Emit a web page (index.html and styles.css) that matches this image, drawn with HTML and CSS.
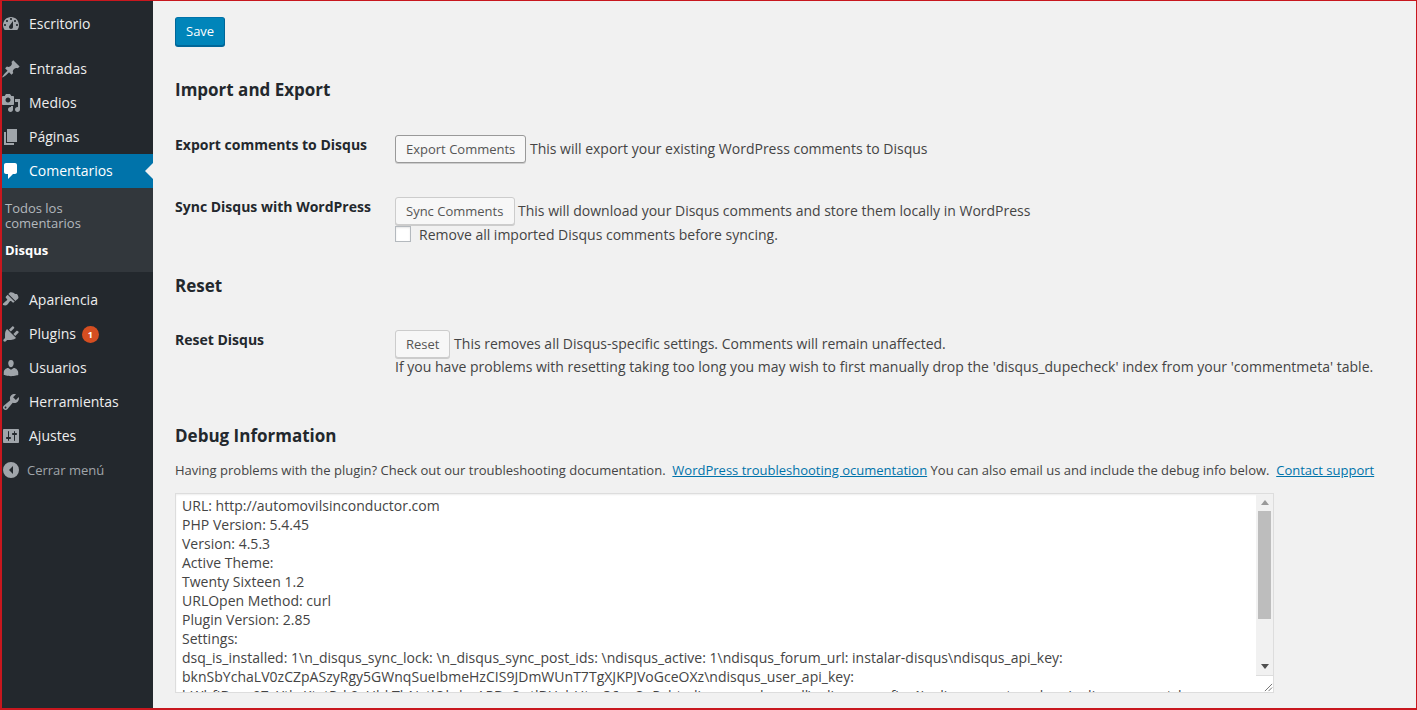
FILE: index.html
```html
<!DOCTYPE html>
<html lang="es">
<head>
<meta charset="utf-8">
<title>Disqus</title>
<link rel="stylesheet" href="styles.css">
</head>
<body>
<div class="frame">
  <nav class="sidebar">
    <a class="item first"><svg class="ico" viewBox="0 0 20 20"><path fill-rule="evenodd" d="M3.760 16h12.480c1.100-1.370 1.760-3.110 1.760-5 0-4.420-3.580-8-8-8s-8 3.580-8 8c0 1.890.66 3.630 1.760 5zM10 4c.55 0 1 .45 1 1s-.45 1-1 1-1-.45-1-1 .45-1 1-1zM6 6c.55 0 1 .45 1 1s-.45 1-1 1-1-.45-1-1 .45-1 1-1zm8 0c.55 0 1 .45 1 1s-.45 1-1 1-1-.45-1-1 .45-1 1-1zm-5.370 5.550L12 7v6c0 1.100-.9 2-2 2s-2-.9-2-2c0-.57.24-1.080.63-1.450zM4 10c.55 0 1 .45 1 1s-.45 1-1 1-1-.45-1-1 .45-1 1-1zm12 0c.55 0 1 .45 1 1s-.45 1-1 1-1-.45-1-1 .45-1 1-1z"/></svg><span>Escritorio</span></a>
    <a class="item"><svg class="ico" viewBox="0 0 20 20"><path d="M10.440 3.020l1.820-1.820 6.360 6.350-1.830 1.820c-1.050-.68-2.480-.57-3.410.36l-.75.75c-.92.93-1.040 2.350-.35 3.410l-1.830 1.820-2.410-2.410-2.800 2.790c-.42.42-3.380 2.710-3.800 2.290s1.860-3.390 2.280-3.810l2.790-2.790L4.100 9.360l1.830-1.820c1.050.69 2.480.57 3.400-.36l.75-.75c.93-.92 1.050-2.350.36-3.410z"/></svg><span>Entradas</span></a>
    <a class="item"><svg class="ico" viewBox="0 0 20 20"><path fill-rule="evenodd" d="M13 11V4c0-.55-.45-1-1-1h-1.670L9 1H5L3.670 3H2c-.55 0-1 .45-1 1v7c0 .55.45 1 1 1h10c.55 0 1-.45 1-1zM7 4.500c1.380 0 2.500 1.120 2.500 2.500S8.380 9.500 7 9.500 4.500 8.380 4.500 7 5.620 4.500 7 4.500zM14 6h5v10.500c0 1.380-1.120 2.500-2.500 2.500S14 17.880 14 16.500s1.120-2.500 2.500-2.500c.17 0 .34.020.5.050V9h-3V6zm-4 8.050V13h2v3.500c0 1.380-1.120 2.500-2.500 2.500S7 17.880 7 16.500 8.120 14 9.500 14c.17 0 .34.020.5.050z"/></svg><span>Medios</span></a>
    <a class="item"><svg class="ico" viewBox="0 0 20 20"><path d="M6 15V2h10v13H6zm-1 1h8v2H3V5h2v11z"/></svg><span>Páginas</span></a>
    <a class="item current"><svg class="ico" viewBox="0 0 20 20"><path d="M5 2h9c1.100 0 2 .9 2 2v7c0 1.100-.9 2-2 2h-2l-5 5v-5H5c-1.100 0-2-.9-2-2V4c0-1.100.9-2 2-2z"/></svg><span>Comentarios</span></a>
    <div class="submenu">
      <a class="sub">Todos los comentarios</a>
      <a class="sub active">Disqus</a>
    </div>
    <a class="item gap-after"><svg class="ico" viewBox="0 0 20 20"><path d="M14.480 11.060L7.410 3.990l1.500-1.500c.5-.56 2.300-.47 3.510.32 1.210.8 1.430 1.280 2.660 1.280 1.240 0 1.530.71 1.820 1.430.29.710 1.060 2.050.2 3.060-.46.460-1.300 1.170-2.620 2.480zm-.710.71L6.700 4.700 4.930 6.470c-.39.390-.39 1.020 0 1.410l1.060 1.060c.39.390.39 1.030 0 1.420-.6.600-1.430 1.110-2.210 1.690-.35.260-.7.530-1.010.840C1.430 13.230 2 15.040 2 15.040c1.500.5 3.300.62 4.430-.51.31-.31.58-.66.840-1.010.58-.78 1.090-1.610 1.690-2.210.39-.39 1.030-.39 1.420 0l1.060 1.060c.39.390 1.020.39 1.410 0z"/></svg><span>Apariencia</span></a>
    <a class="item"><svg class="ico" viewBox="0 0 20 20"><path d="M13.110 4.360L9.870 7.600 8 5.730l3.240-3.240c.35-.34 1.050-.2 1.560.32.520.51.660 1.210.31 1.550zm-8 1.770l.91-1.120 9.010 9.010-1.190.84c-.71.710-2.630 1.160-3.820 1.160H6.140L4.900 17.260c-.59.590-1.540.59-2.120 0-.59-.58-.59-1.530 0-2.120l1.240-1.240v-3.880c0-1.130.4-3.190 1.090-3.890zm7.260 3.970l3.240-3.240c.34-.35 1.040-.21 1.550.31.520.510.660 1.210.31 1.550l-3.240 3.250z"/></svg><span>Plugins</span><b class="badge">1</b></a>
    <a class="item"><svg class="ico" viewBox="0 0 20 20"><path d="M10 9.250c-2.270 0-2.730-3.440-2.730-3.440C7 4.020 7.820 2 9.970 2c2.160 0 2.980 2.020 2.710 3.810 0 0-.41 3.440-2.680 3.440zm0 2.570L12.720 10c2.390 0 4.520 2.330 4.520 4.530v2.490s-3.650 1.130-7.240 1.130c-3.650 0-7.240-1.130-7.240-1.130v-2.490c0-2.250 1.940-4.480 4.470-4.480z"/></svg><span>Usuarios</span></a>
    <a class="item"><svg class="ico" viewBox="0 0 20 20"><path fill-rule="evenodd" d="M16.680 9.770c-1.340 1.340-3.300 1.670-4.950.99l-5.410 6.520c-.99.990-2.590.99-3.580 0s-.99-2.590 0-3.570l6.520-5.420c-.68-1.650-.35-3.610.99-4.950 1.280-1.280 3.120-1.620 4.720-1.060l-2.890 2.890 2.820 2.820 2.860-2.870c.53 1.580.18 3.390-1.080 4.650zM3.810 16.210c.4.390 1.040.39 1.430 0 .4-.4.4-1.040 0-1.430-.39-.4-1.030-.4-1.430 0-.39.39-.39 1.030 0 1.430z"/></svg><span>Herramientas</span></a>
    <a class="item"><svg class="ico" viewBox="0 0 20 20"><path fill-rule="evenodd" d="M18 16V4c0-.55-.45-1-1-1H3c-.55 0-1 .45-1 1v12c0 .55.45 1 1 1h14c.55 0 1-.45 1-1zM8 11h1c.55 0 1 .45 1 1s-.45 1-1 1H8v1.500c0 .28-.22.5-.5.5s-.5-.22-.5-.5V13H6c-.55 0-1-.45-1-1s.45-1 1-1h1V5.500c0-.28.22-.5.5-.5s.5.22.5.5V11zm5-2h-1c-.55 0-1-.45-1-1s.45-1 1-1h1V5.500c0-.28.22-.5.5-.5s.5.22.5.5V7h1c.55 0 1 .45 1 1s-.45 1-1 1h-1v5.500c0 .28-.22.5-.5.5s-.5-.22-.5-.5V9z"/></svg><span>Ajustes</span></a>
    <a class="item collapse"><svg class="ico" viewBox="0 0 20 20"><path fill-rule="evenodd" d="M10 2a8 8 0 1 0 0 16 8 8 0 0 0 0-16zM12 6v8l-4-4z"/></svg><span>Cerrar menú</span></a>
  </nav>
  <main class="content">
    <button class="btn primary">Save</button>
    <h2 class="title import">Import and Export</h2>
    <div class="row export">
      <div class="label">Export comments to Disqus</div>
      <div class="field"><button class="btn">Export Comments</button> This will export your existing WordPress comments to Disqus</div>
    </div>
    <div class="row sync">
      <div class="label">Sync Disqus with WordPress</div>
      <div class="field">
        <button class="btn soft wide">Sync Comments</button> This will download your Disqus comments and store them locally in WordPress
        <label class="check"><span class="box"></span>Remove all imported Disqus comments before syncing.</label>
      </div>
    </div>
    <h2 class="title reset">Reset</h2>
    <div class="row resetrow">
      <div class="label">Reset Disqus</div>
      <div class="field"><button class="btn soft">Reset</button> This removes all Disqus-specific settings. Comments will remain unaffected.
        <div class="note">If you have problems with resetting taking too long you may wish to first manually drop the 'disqus_dupecheck' index from your 'commentmeta' table.</div>
      </div>
    </div>
    <h2 class="title debug">Debug Information</h2>
    <p class="help">Having problems with the plugin? Check out our troubleshooting documentation. &nbsp;<a>WordPress troubleshooting ocumentation</a> You can also email us and include the debug info below. &nbsp;<a>Contact support</a></p>
    <div class="debugbox">
      <div class="log">
        <div>URL: http://automovilsinconductor.com</div>
        <div>PHP Version: 5.4.45</div>
        <div>Version: 4.5.3</div>
        <div>Active Theme:</div>
        <div>Twenty Sixteen 1.2</div>
        <div>URLOpen Method: curl</div>
        <div>Plugin Version: 2.85</div>
        <div>Settings:</div>
        <div>dsq_is_installed: 1\n_disqus_sync_lock: \n_disqus_sync_post_ids: \ndisqus_active: 1\ndisqus_forum_url: instalar-disqus\ndisqus_api_key:</div>
        <div>bknSbYchaLV0zCZpASzyRgy5GWnqSueIbmeHzCIS9JDmWUnT7TgXJKPJVoGceOXz\ndisqus_user_api_key:</div>
        <div>bWbfiBxxq97xYtkzKtxtPrk0xUhkThNytlQbdxzARBxQutlBHxhHtxz36xxQxPxbtxdisqus_replace: all\ndisqus_cc_fix: 1\ndisqus_partner_key: \ndisqus_secret_key:</div>
      </div>
      <div class="bar">
        <span class="arrow up"></span>
        <span class="thumb"></span>
        <span class="arrow down"></span>
        <span class="grip"><svg viewBox="0 0 10 10"><path d="M1 9L9 1M5 9L9 5" stroke="#666" fill="none"/></svg></span>
      </div>
    </div>
  </main>
</div>
</body>
</html>
```
FILE: styles.css
```css
* { box-sizing: border-box; }
html, body { margin: 0; height: 100%; overflow: hidden; }
body { font-family: "Open Sans", sans-serif; font-size: 14px; color: #444; background: #f1f1f1; }
.frame {
  display: flex; height: 710px;
  border: 1px solid #c8171e; border-left-width: 2px; border-bottom-width: 2px;
  background: #f1f1f1; overflow: hidden;
}
.sidebar { width: 151px; flex: none; background: #23282d; padding-top: 6px; }
.item { display: flex; align-items: center; height: 34px; color: #eee; font-size: 14px; position: relative; }
.item span { line-height: 18px; }
.ico { width: 20px; height: 20px; margin: 0 8px 0 -1px; flex: none; fill: #a0a5aa; }
.first { margin-bottom: 11px; }
.gap-after { margin-top: 11px; }
.current { background: #0073aa; color: #fff; }
.current .ico { fill: #fff; }
.current::after {
  content: ""; position: absolute; right: 0; top: 9px;
  border: 8px solid transparent; border-right-color: #f1f1f1; border-left-width: 0;
}
.submenu { background: #32373c; padding: 12px 0 10px 3px; height: 84px; }
.sub { display: block; font-size: 13px; line-height: 15px; color: #b4b9be; padding: 1px 20px 5px 0; }
.sub.active { color: #fff; font-weight: 700; padding-top: 7px; }
.badge {
  display: inline-flex; align-items: center; justify-content: center;
  width: 17px; height: 17px; border-radius: 50%; margin-left: 6px;
  background: #d54e21; color: #fff; font-size: 9px; font-weight: 700;
}
.collapse { color: #a0a5aa; font-size: 13px; }
.collapse .ico { margin-right: 6px; }
.content { flex: 1; min-width: 0; padding: 16px 0 0 22px; color: #444; }
.btn {
  font-family: inherit; font-size: 13px; line-height: 26px; height: 28px;
  padding: 0 10px; margin: 0; background: #f7f7f7; color: #555;
  border: 1px solid #999; border-radius: 3px; box-shadow: 0 1px 0 #ccc; vertical-align: top;
}
.soft { border-color: #ccc; }
.wide { padding-right: 11px; margin-right: -1px; }
.primary {
  display: block; height: 29px; padding-bottom: 2px; background: #0085ba; color: #fff;
  border-color: #0073aa #006799 #006799; box-shadow: 0 1px 0 #006799;
}
.title { margin: 0; font-size: 17px; line-height: 24px; font-weight: 700; color: #23282d; }
.import { margin-top: 32px; }
.reset { margin-top: 31px; }
.debug { margin-top: 48px; }
.row { display: flex; }
.export { margin-top: 33px; }
.sync { margin-top: 34px; }
.resetrow { margin-top: 32px; }
.label { width: 220px; flex: none; font-weight: 700; line-height: 19px; color: #23282d; }
.field { line-height: 28px; flex: 1; min-width: 0; white-space: nowrap; }
.check { display: flex; align-items: center; line-height: 19px; height: 18px; }
.box { width: 16px; height: 16px; border: 1px solid #b4b9be; background: #fff; margin-right: 8px; box-shadow: inset 0 1px 2px rgba(0,0,0,.1); }
.note { line-height: 19px; margin-top: -1px; letter-spacing: .012px; }
.help { margin: 13px 0 0; font-size: 13px; line-height: 18px; white-space: nowrap; letter-spacing: .005px; }
.help a { color: #0073aa; text-decoration: underline; }
.debugbox {
  display: flex; width: 1099px; height: 200px; margin-top: 14px; background: #fff;
  border: 1px solid #ddd; box-shadow: inset 0 1px 2px rgba(0,0,0,.07); overflow: hidden;
}
.log { flex: 1; min-width: 0; padding: 2px 6px; line-height: 19px; letter-spacing: .02px; white-space: nowrap; overflow: hidden; color: #444; }
.bar { width: 17px; flex: none; background: #f1f1f1; display: flex; flex-direction: column; align-items: center; position: relative; }
.arrow { width: 0; height: 0; border: 4px solid transparent; flex: none; }
.up { border-bottom: 5px solid #999; border-top-width: 0; margin-top: 6px; }
.thumb { width: 13px; height: 108px; background: #bdbdbd; margin-top: 6px; flex: none; }
.down { border-top: 5px solid #505050; border-bottom-width: 0; margin-top: 45px; }
.grip { position: absolute; left: 0; bottom: 0; width: 17px; height: 17px; background: #fff; border-top: 1px solid #ddd; display: flex; align-items: flex-end; justify-content: flex-end; }
.grip svg { width: 9px; height: 9px; }
```
